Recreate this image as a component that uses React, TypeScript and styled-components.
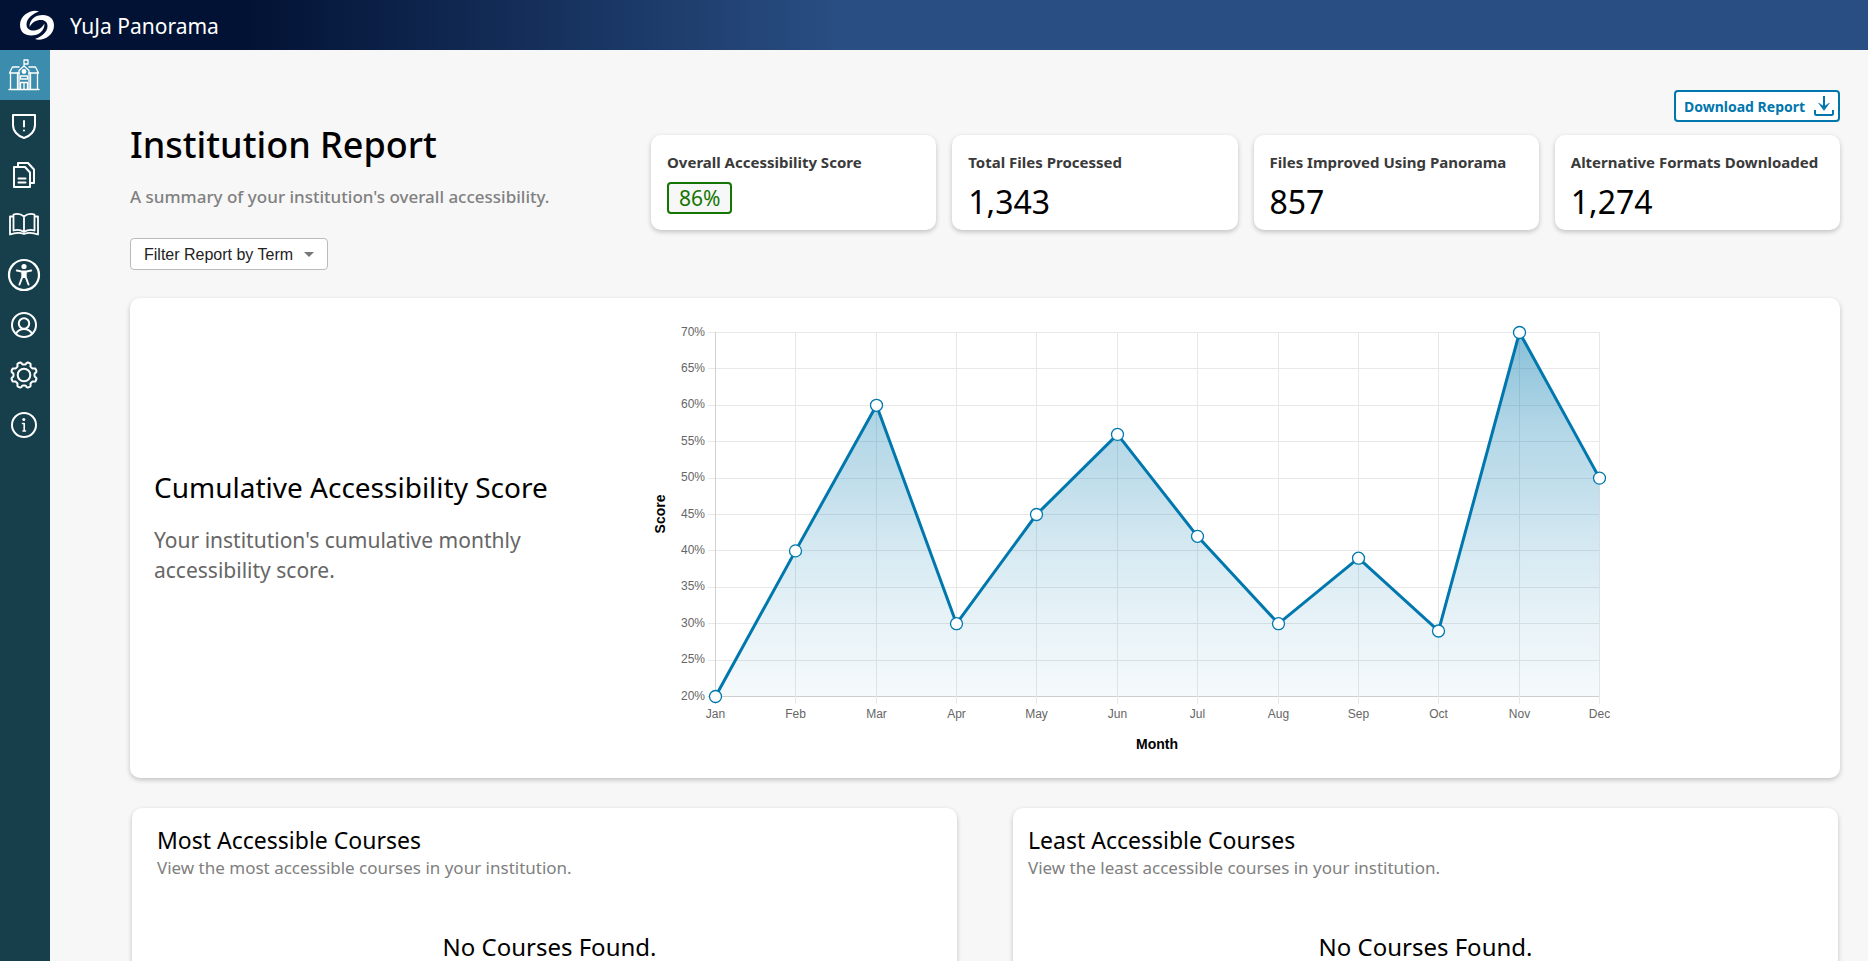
import React from "react";
import styled, { createGlobalStyle } from "styled-components";

const GlobalStyle = createGlobalStyle`
  *, *::before, *::after { box-sizing: border-box; }
  body {
    margin: 0;
    background: #f7f7f7;
    color: #000;
    font-family: "Segoe UI", "Noto Sans", sans-serif;
  }
  h1, h2, p, dl, dt, dd, ul { margin: 0; padding: 0; font-weight: 400; }
`;

const Shell = styled.div`
  display: flex;
  flex-direction: column;
  height: 100vh;
`;

const TopBar = styled.header`
  display: flex;
  align-items: center;
  gap: 16px;
  flex: none;
  height: 50px;
  padding: 0 20px;
  color: #fff;
  background: linear-gradient(90deg, #021234 13%, #294e83 45%);
`;

const Brand = styled.span`
  padding-top: 2px;
  font-size: 21px;
  line-height: 28px;
`;

const Body = styled.div`
  display: flex;
  flex: 1;
  min-height: 0;
`;

const Sidebar = styled.nav`
  flex: none;
  width: 50px;
  background: #173e4b;
`;

const NavList = styled.ul`
  list-style: none;
`;

const NavLink = styled.a<{ $active?: boolean }>`
  display: block;
  height: 50px;
  color: #fff;
  background: ${(p) => (p.$active ? "#3c8dad" : "transparent")};
`;

const NavIcon = styled.svg`
  display: block;
  width: 50px;
  height: 50px;
  fill: none;
  stroke: currentColor;
  stroke-width: 2;
  stroke-linecap: round;
  stroke-linejoin: round;
`;

const Main = styled.main`
  flex: 1;
  min-width: 0;
  padding: 40px 28px 0 80px;
  overflow-y: auto;
  scrollbar-width: none;
`;

const Intro = styled.section`
  display: grid;
  grid-template-columns: 521px minmax(0, 1fr);
  margin-bottom: 28px;
`;

const Heading = styled.div`
  padding-top: 31px;
`;

const Title = styled.h1`
  margin-bottom: 16px;
  font-size: 36px;
  font-weight: 500;
  line-height: 48px;
`;

const Subtitle = styled.p`
  margin-bottom: 29px;
  color: #808080;
  font-size: 17px;
  font-weight: 500;
  line-height: 24px;
`;

const SelectBox = styled.div`
  position: relative;
  width: 198px;
`;

const TermSelect = styled.select`
  display: block;
  width: 100%;
  height: 32px;
  padding: 0 24px 0 13px;
  appearance: none;
  border: 1px solid #bbb;
  border-radius: 4px;
  background: #fff;
  color: #222;
  font: 16px "Liberation Sans", Arial, sans-serif;
`;

const Caret = styled.svg`
  position: absolute;
  top: 14px;
  right: 14px;
  width: 10px;
  height: 5px;
  fill: #777;
  pointer-events: none;
`;

const Summary = styled.div`
  display: flex;
  flex-direction: column;
  align-items: flex-end;
  gap: 13px;
`;

const DownloadButton = styled.button`
  display: flex;
  align-items: center;
  justify-content: space-between;
  width: 166px;
  height: 32px;
  padding: 0 4px 0 8px;
  border: 2px solid #0076ad;
  border-radius: 4px;
  background: #fff;
  color: #0076ad;
  font-family: inherit;
  font-size: 14px;
  font-weight: 700;
  white-space: nowrap;
`;

const Stats = styled.dl`
  display: grid;
  grid-template-columns: repeat(4, minmax(0, 1fr));
  gap: 16px;
  width: 100%;
`;

const Card = styled.div`
  border-radius: 10px;
  background: #fff;
  box-shadow: 0 2px 5px rgba(0, 0, 0, 0.22);
`;

const StatCard = styled(Card)`
  height: 95px;
  padding: 17px 16px 8px;
`;

const StatLabel = styled.dt`
  margin-bottom: 10px;
  color: #3a3a3a;
  font-size: 15px;
  font-weight: 700;
  line-height: 20px;
  white-space: nowrap;
`;

const StatValue = styled.dd`
  font-size: 32px;
  line-height: 40px;
`;

const ScoreBadge = styled.dd`
  width: fit-content;
  padding: 0 10px;
  border: 2px solid #157502;
  border-radius: 4px;
  background: #f7f7f7;
  color: #157502;
  font-size: 21px;
  line-height: 28px;
`;

const ChartCard = styled(Card)`
  display: grid;
  grid-template-columns: 520px minmax(0, 1fr);
  align-items: center;
  margin-bottom: 30px;
  padding: 20px 0;
`;

const ChartText = styled.div`
  padding: 0 24px 22px;
`;

const ChartTitle = styled.h2`
  margin-bottom: 20px;
  font-size: 28px;
  line-height: 36px;
`;

const ChartNote = styled.p`
  max-width: 440px;
  color: #666;
  font-size: 21px;
  line-height: 30px;
`;

const ChartSvg = styled.svg`
  display: block;
  width: 960px;
  max-width: 100%;
  font: 12px "Liberation Sans", Arial, sans-serif;
`;

const TickLabel = styled.text`
  fill: #666;
`;

const AxisTitle = styled.text`
  fill: #000;
  font-size: 14px;
  font-weight: 700;
  text-anchor: middle;
`;

const Courses = styled.section`
  display: grid;
  grid-template-columns: repeat(2, minmax(0, 1fr));
  gap: 56px;
  padding: 0 2px 28px;
`;

const CourseCard = styled(Card)<{ $inset: number }>`
  min-height: 260px;
  padding: 18px 15px 18px ${(p) => p.$inset}px;
`;

const CourseTitle = styled.h2`
  font-size: 23px;
  line-height: 28px;
`;

const CourseNote = styled.p`
  color: #808080;
  font-size: 17px;
  line-height: 28px;
`;

const EmptyNote = styled.p`
  margin-top: 51px;
  font-size: 24px;
  line-height: 28px;
  text-align: center;
`;

const HOOK =
  "M19 1.5C13-1.5 0 4 0 15C0 22 5 25.5 11 25.5C19 25.5 24.500 21 24.500 13.500C22 18 18 20.500 13 20.500C9 20.500 6.500 18 6.500 14.500C6.500 8.500 12 4 19 1.500Z";

function Logo() {
  return (
    <svg width="34" height="31" viewBox="0 0 34 31" fill="#fff" aria-hidden="true">
      <path d={HOOK} />
      <path d={HOOK} transform="rotate(180 17 15.2)" />
    </svg>
  );
}

// Eight rounded teeth around the centre of the 50px cell.
const gearPath =
  Array.from({ length: 144 }, (_, i) => {
    const a = (i / 144) * Math.PI * 2;
    const r = 11.8 + 1.3 * Math.tanh(-2.4 * Math.cos(8 * a));
    const x = 24 + r * Math.cos(a);
    const y = 25 + r * Math.sin(a);
    return `${i ? "L" : "M"}${x.toFixed(2)} ${y.toFixed(2)}`;
  }).join("") + "Z";

const NAV: { label: string; icon: React.ReactNode }[] = [
  {
    label: "Institution report",
    icon: (
      <g strokeWidth="1.3">
        <path d="M9 39.500H39M10.500 23V39.500M37.500 23V39.500M17.500 23V39M30.500 23V39" />
        <path d="M19 17H12.500L9.500 23H19M29 17H35.500L38.500 23H29" />
        <path d="M19 39.500V20.500L24 16L29 20.500V39.500M24 16V10H28V14H24" />
        <circle cx="24" cy="21.500" r="1.800" fill="currentColor" />
        <path d="M20.500 26H27.500V29H20.500ZM20.500 39V32.500H27.500V39M24 32.500V39" />
      </g>
    ),
  },
  {
    label: "Issues",
    icon: (
      <>
        <path d="M13 15H35V25C35 31 30.500 36 24 38C17.500 36 13 31 13 25Z" />
        <path d="M24 21V26.500M24 30.500V30.600" />
      </>
    ),
  },
  {
    label: "Documents",
    icon: (
      <>
        <path d="M18 16V13H28L34 19.500V33H31" />
        <path d="M14 17H25L30 22.500V37H14Z" />
        <path d="M18.500 28.500H25.500M18.500 32.500H25.500" />
      </>
    ),
  },
  {
    label: "Courses",
    icon: (
      <g strokeWidth="1.8">
        <path d="M24 16.500C21 14 17 13.500 13.500 14.500V30.500C17 29.500 21 30 24 32C27 30 31 29.500 34.500 30.500V14.500C31 13.500 27 14 24 16.500V32" />
        <path d="M13 16.500H10V34.500C14 33 20 32.500 24 34C28 32.500 34 33 38 34.500V16.500H35" />
      </g>
    ),
  },
  {
    label: "Accessibility",
    icon: (
      <>
        <circle cx="24" cy="25" r="15" strokeWidth="2.200" />
        <circle cx="24" cy="16.500" r="2.600" fill="currentColor" stroke="none" />
        <path d="M16.800 20.500L21.500 21.500H26.500L31.200 20.500" />
        <path d="M22.300 22H25.700V27L28.500 34.500M22.300 22V27L19.500 34.500M22.500 27H25.500M24 22V27" />
      </>
    ),
  },
  {
    label: "Users",
    icon: (
      <>
        <circle cx="24" cy="25" r="12" />
        <circle cx="24" cy="23.500" r="5.200" />
        <path d="M16 33.500C18 30.500 20.500 29 24 29C27.500 29 30 30.500 32 33.500" />
      </>
    ),
  },
  {
    label: "Settings",
    icon: (
      <>
        <path d={gearPath} />
        <circle cx="24" cy="25" r="6.300" />
      </>
    ),
  },
  {
    label: "About",
    icon: (
      <>
        <circle cx="24" cy="25" r="12" />
        <path strokeWidth="1.600" d="M22.500 23.500H24.200V31H25.500M23 31H24" />
        <circle cx="23.800" cy="19.500" r="1.500" fill="currentColor" stroke="none" />
      </>
    ),
  },
];

function DownloadIcon() {
  return (
    <svg width="20" height="20" viewBox="0 0 20 20" fill="none" stroke="currentColor" strokeWidth="2" aria-hidden="true">
      <path d="M10 0V11" />
      <path d="M4.500 7L10 10.500L15.500 7L10 14.500Z" fill="currentColor" strokeWidth="0.500" />
      <path d="M1 14V17.500Q1 19 2.500 19H17.500Q19 19 19 17.500V14" />
    </svg>
  );
}

const SCORES: [string, number][] = [
  ["Jan", 20], ["Feb", 40], ["Mar", 60], ["Apr", 30], ["May", 45], ["Jun", 56],
  ["Jul", 42], ["Aug", 30], ["Sep", 39], ["Oct", 29], ["Nov", 70], ["Dec", 50],
];
const FILL_STOPS = [
  [0, 0.47], [0.2, 0.34], [0.28, 0.29], [0.4, 0.25], [0.6, 0.16], [0.8, 0.09], [1, 0.04],
];
const LEFT = 65;
const RIGHT = 949;
const TOP = 14;
const BOTTOM = 378;
const crisp = (n: number) => Math.floor(n) + 0.5;
const xAt = (i: number) => Math.round(LEFT + (i * (RIGHT - LEFT)) / (SCORES.length - 1)) + 0.5;
const yAt = (v: number) => TOP + 0.5 + ((70 - v) * (BOTTOM - TOP)) / 50;

function ScoreChart() {
  const points = SCORES.map(([, v], i) => `${xAt(i)},${yAt(v)}`).join(" ");
  const ticks = Array.from({ length: 11 }, (_, i) => 70 - i * 5);
  return (
    <ChartSvg viewBox="0 0 960 440" role="img" aria-label="Cumulative accessibility score by month">
      <defs>
        <linearGradient id="fill" gradientUnits="userSpaceOnUse" x1="0" y1={TOP} x2="0" y2={BOTTOM}>
          {FILL_STOPS.map(([at, alpha]) => (
            <stop key={at} offset={at} stopColor="#0078ae" stopOpacity={alpha} />
          ))}
        </linearGradient>
      </defs>
      {ticks.map((t) => (
        <g key={t}>
          <line x1={LEFT - 7} x2={RIGHT + 1} y1={crisp(yAt(t))} y2={crisp(yAt(t))} stroke={t === 20 ? "#d0d0d0" : "#e8e8e8"} />
          <TickLabel x={55} y={Math.round(yAt(t)) + 3} textAnchor="end">{t}%</TickLabel>
        </g>
      ))}
      {SCORES.map(([m], i) => (
        <g key={m}>
          <line x1={xAt(i)} x2={xAt(i)} y1={TOP} y2={BOTTOM + 8} stroke={i === 0 ? "#d0d0d0" : "#e8e8e8"} />
          <TickLabel x={xAt(i)} y={400} textAnchor="middle">{m}</TickLabel>
        </g>
      ))}
      <polygon points={`${xAt(0)},${BOTTOM + 0.5} ${points} ${RIGHT + 0.5},${BOTTOM + 0.5}`} fill="url(#fill)" />
      <polyline points={points} fill="none" stroke="#0078ae" strokeWidth="3" strokeLinejoin="round" />
      {SCORES.map(([m, v], i) => (
        <circle key={m} cx={xAt(i)} cy={yAt(v)} r="6" fill="#fff" stroke="#0078ae" strokeWidth="1.300" />
      ))}
      <AxisTitle x={507} y={431}>Month</AxisTitle>
      <AxisTitle transform="translate(15 196) rotate(-90)">Score</AxisTitle>
    </ChartSvg>
  );
}

const STATS = [
  { label: "Total Files Processed", value: "1,343" },
  { label: "Files Improved Using Panorama", value: "857" },
  { label: "Alternative Formats Downloaded", value: "1,274" },
];

export default function App() {
  return (
    <Shell>
      <GlobalStyle />
      <TopBar>
        <Logo />
        <Brand>YuJa Panorama</Brand>
      </TopBar>
      <Body>
        <Sidebar aria-label="Main">
          <NavList>
            {NAV.map(({ label, icon }, i) => (
              <li key={label}>
                <NavLink href="#" aria-label={label} $active={i === 0}>
                  <NavIcon viewBox="0 0 50 50" aria-hidden="true">{icon}</NavIcon>
                </NavLink>
              </li>
            ))}
          </NavList>
        </Sidebar>
        <Main>
          <Intro>
            <Heading>
              <Title>Institution Report</Title>
              <Subtitle>A summary of your institution's overall accessibility.</Subtitle>
              <SelectBox>
                <TermSelect aria-label="Filter Report by Term">
                  <option>Filter Report by Term</option>
                </TermSelect>
                <Caret viewBox="0 0 10 5" aria-hidden="true">
                  <path d="M0 0H10L5 5Z" />
                </Caret>
              </SelectBox>
            </Heading>
            <Summary>
              <DownloadButton type="button">
                Download Report
                <DownloadIcon />
              </DownloadButton>
              <Stats>
                <StatCard>
                  <StatLabel>Overall Accessibility Score</StatLabel>
                  <ScoreBadge>86%</ScoreBadge>
                </StatCard>
                {STATS.map(({ label, value }) => (
                  <StatCard key={label}>
                    <StatLabel>{label}</StatLabel>
                    <StatValue>{value}</StatValue>
                  </StatCard>
                ))}
              </Stats>
            </Summary>
          </Intro>
          <ChartCard as="section">
            <ChartText>
              <ChartTitle>Cumulative Accessibility Score</ChartTitle>
              <ChartNote>Your institution's cumulative monthly accessibility score.</ChartNote>
            </ChartText>
            <ScoreChart />
          </ChartCard>
          <Courses>
            <CourseCard $inset={25}>
              <CourseTitle>Most Accessible Courses</CourseTitle>
              <CourseNote>View the most accessible courses in your institution.</CourseNote>
              <EmptyNote>No Courses Found.</EmptyNote>
            </CourseCard>
            <CourseCard $inset={15}>
              <CourseTitle>Least Accessible Courses</CourseTitle>
              <CourseNote>View the least accessible courses in your institution.</CourseNote>
              <EmptyNote>No Courses Found.</EmptyNote>
            </CourseCard>
          </Courses>
        </Main>
      </Body>
    </Shell>
  );
}
